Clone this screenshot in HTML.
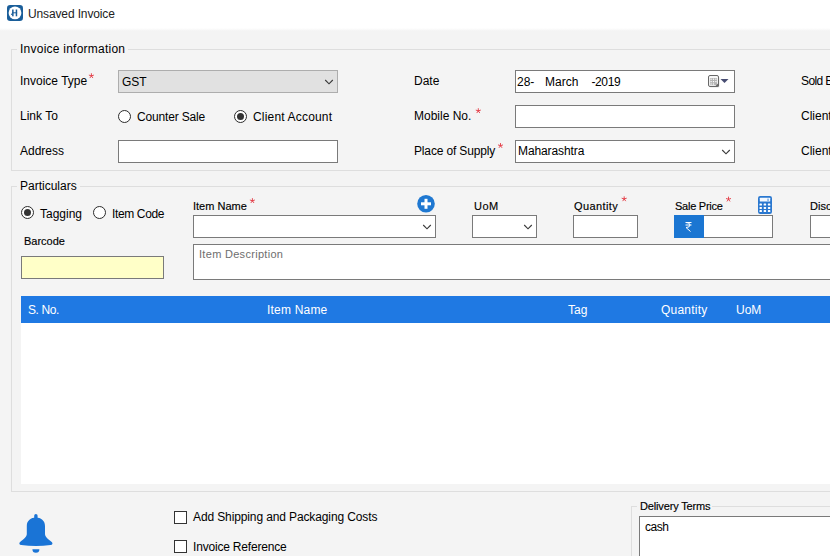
<!DOCTYPE html>
<html><head><meta charset="utf-8">
<style>
html,body{margin:0;padding:0;}
body{width:830px;height:556px;overflow:hidden;position:relative;background:#f4f4f4;font-family:"Liberation Sans",sans-serif;font-size:12px;color:#000;}
.a{position:absolute;}
.t{position:absolute;font-size:12px;line-height:14px;white-space:nowrap;}
.box{position:absolute;box-sizing:border-box;border:1px solid #7a7a7a;background:#fff;}
.grp{position:absolute;box-sizing:border-box;border:1px solid #dedede;}
.st{position:absolute;color:#e23b3b;font-size:11px;line-height:11px;}
.rad{position:absolute;box-sizing:border-box;width:13px;height:13px;border:1.2px solid #2b2b2b;border-radius:50%;background:#fff;}
.rad.on::after{content:"";position:absolute;left:1.8px;top:1.8px;width:7px;height:7px;border-radius:50%;background:#333;}
.chk{position:absolute;box-sizing:border-box;width:13px;height:13px;border:1px solid #333;background:#fff;}
.hdr{color:#fff;}
.sl{font-size:11px;-webkit-text-stroke:0.15px #000;}
</style></head><body>
<!-- title bar -->
<div class="a" style="left:0;top:0;width:830px;height:31px;background:linear-gradient(#fff 0,#fff 28px,#f4f4f4 31px);"></div>
<svg class="a" style="left:7px;top:5px" width="16" height="16" viewBox="0 0 16 16">
<rect x="0" y="0" width="16" height="16" rx="3.2" fill="#1a5e99"/>
<circle cx="8" cy="7.9" r="6.4" fill="#fff"/>
<rect x="5.1" y="4.5" width="1.5" height="6.8" fill="#1a5e99"/>
<rect x="8.7" y="4.5" width="1.5" height="6.8" fill="#1a5e99"/>
<rect x="5.1" y="7.3" width="5" height="1" fill="#1a5e99"/>
<rect x="4.2" y="8.6" width="1.2" height="1.4" fill="#1a5e99"/>
</svg>
<div class="t" style="left:28px;top:7px;color:#222;letter-spacing:-0.13px;">Unsaved Invoice</div>

<!-- group 1 -->
<div class="grp" style="left:11px;top:49px;width:830px;height:122px;"></div>
<div class="t" style="left:17px;top:42px;padding:0 3px;background:#f4f4f4;letter-spacing:0.24px;">Invoice information</div>

<div class="t" style="left:20px;top:74px;">Invoice Type</div>
<div class="box" style="left:118px;top:70px;width:220px;height:23px;background:#e1e1e1;border-color:#adadad;"></div>
<div class="t" style="left:122px;top:75px;">GST</div>

<div class="t" style="left:20px;top:109px;">Link To</div>
<div class="rad" style="left:118px;top:110px;"></div>
<div class="t" style="left:137px;top:110px;letter-spacing:-0.16px;">Counter Sale</div>
<div class="rad on" style="left:234px;top:110px;"></div>
<div class="t" style="left:253px;top:110px;letter-spacing:0.18px;">Client Account</div>

<div class="t" style="left:20px;top:144px;">Address</div>
<div class="box" style="left:118px;top:140px;width:220px;height:23px;"></div>

<div class="t" style="left:414px;top:74px;">Date</div>
<div class="box" style="left:515px;top:70px;width:220px;height:23px;"></div>
<div class="t" style="left:517px;top:75px;">28-</div>
<div class="t" style="left:545px;top:75px;">March</div>
<div class="t" style="left:591.5px;top:75px;letter-spacing:-0.4px;">-2019</div>

<div class="t" style="left:414px;top:109px;">Mobile No.</div>
<div class="box" style="left:515px;top:105px;width:220px;height:23px;"></div>

<div class="t" style="left:414px;top:144px;letter-spacing:-0.15px;">Place of Supply</div>
<div class="box" style="left:515px;top:140px;width:220px;height:23px;"></div>
<div class="t" style="left:518px;top:144px;letter-spacing:-0.1px;">Maharashtra</div>

<div class="t" style="left:801px;top:74px;letter-spacing:-0.6px;">Sold By</div>
<div class="t" style="left:801px;top:109px;">Client Name</div>
<div class="t" style="left:801px;top:144px;">Client Code</div>

<!-- group 2 -->
<div class="grp" style="left:11px;top:186px;width:830px;height:306px;"></div>
<div class="t" style="left:17px;top:179px;padding:0 3px;background:#f4f4f4;">Particulars</div>

<div class="rad on" style="left:21px;top:206px;"></div>
<div class="t" style="left:40px;top:207px;">Tagging</div>
<div class="rad" style="left:93px;top:206px;"></div>
<div class="t" style="left:112px;top:207px;letter-spacing:-0.36px;">Item Code</div>

<div class="t sl" style="left:24px;top:234px;">Barcode</div>
<div class="box" style="left:21px;top:256px;width:143px;height:23px;background:#ffffc8;"></div>

<div class="t sl" style="left:193px;top:199px;">Item Name</div>
<div class="box" style="left:193px;top:215px;width:243px;height:23px;"></div>

<div class="t sl" style="left:474px;top:199px;letter-spacing:0.5px;">UoM</div>
<div class="box" style="left:472px;top:215px;width:65px;height:23px;"></div>

<div class="t sl" style="left:574px;top:199px;letter-spacing:0.4px;">Quantity</div>
<div class="box" style="left:573px;top:215px;width:65px;height:23px;"></div>

<div class="t sl" style="left:675px;top:199px;letter-spacing:-0.25px;">Sale Price</div>
<div class="box" style="left:674px;top:215px;width:99px;height:23px;"></div>
<div class="a" style="left:674px;top:215px;width:30px;height:23px;background:#1b76d2;"></div>

<div class="t sl" style="left:810px;top:199px;">Discount</div>
<div class="box" style="left:810px;top:215px;width:60px;height:23px;"></div>

<div class="box" style="left:193px;top:244px;width:700px;height:36px;"></div>
<div class="t" style="left:199px;top:247px;color:#6e6e6e;font-size:11px;letter-spacing:0.3px;">Item Description</div>

<!-- table -->
<div class="a" style="left:21px;top:296px;width:809px;height:27px;background:#1f79e3;"></div>
<div class="a" style="left:21px;top:323px;width:809px;height:161px;background:#fff;"></div>
<div class="t hdr" style="left:28px;top:303px;letter-spacing:-0.4px;">S. No.</div>
<div class="t hdr" style="left:267px;top:303px;letter-spacing:0.2px;">Item Name</div>
<div class="t hdr" style="left:568px;top:303px;">Tag</div>
<div class="t hdr" style="left:661px;top:303px;letter-spacing:0.23px;">Quantity</div>
<div class="t hdr" style="left:736px;top:303px;">UoM</div>

<!-- bottom -->
<div class="chk" style="left:174px;top:511px;"></div>
<div class="t" style="left:193px;top:510px;letter-spacing:-0.12px;">Add Shipping and Packaging Costs</div>
<div class="chk" style="left:174px;top:540px;"></div>
<div class="t" style="left:193px;top:540px;letter-spacing:-0.19px;">Invoice Reference</div>

<div class="grp" style="left:631px;top:506px;width:300px;height:100px;"></div>
<div class="t sl" style="left:637px;top:499px;padding:0 2px 0 3px;background:#f4f4f4;letter-spacing:-0.15px;">Delivery Terms</div>
<div class="box" style="left:639px;top:516px;width:300px;height:60px;"></div>
<div class="t" style="left:645px;top:520px;letter-spacing:-0.5px;">cash</div>


<!-- icons -->
<svg class="a" style="left:0;top:0" width="830" height="556" viewBox="0 0 830 556">
<g fill="none" stroke="#3a3a3a" stroke-width="1.15">
<polyline points="325.2,80 329,83.8 332.8,80"/>
<polyline points="722.2,150 726,153.8 729.8,150"/>
<polyline points="423.2,225 427,228.8 430.8,225"/>
<polyline points="524.2,225 528,228.8 531.8,225"/>
</g>
<!-- calendar -->
<rect x="709.5" y="76.5" width="10" height="11" rx="1.5" fill="#e6e6e6"/>
<rect x="708.5" y="75.5" width="10" height="11" rx="1.5" fill="#f7f7f7" stroke="#686868" stroke-width="1"/>
<rect x="709.9" y="78" width="7.2" height="7.2" fill="#b4b4b4"/>
<g fill="#fff"><rect x="710.5" y="78.6" width="1.2" height="1.2"/><rect x="712.9" y="78.6" width="1.2" height="1.2"/><rect x="715.3" y="78.6" width="1.2" height="1.2"/><rect x="710.5" y="81.0" width="1.2" height="1.2"/><rect x="712.9" y="81.0" width="1.2" height="1.2"/><rect x="715.3" y="81.0" width="1.2" height="1.2"/><rect x="710.5" y="83.4" width="1.2" height="1.2"/><rect x="712.9" y="83.4" width="1.2" height="1.2"/></g>
<path d="M715 86.5 L719 82.5 L719 86.5 Z" fill="#686868"/>
<polygon points="720.5,79 728.5,79 724.5,83" fill="#474d72"/>
<g stroke="#e4424c" stroke-width="0.95" stroke-linecap="round"><path d="M91.40 75.90L91.40 73.65M91.40 75.90L93.54 75.20M91.40 75.90L92.72 77.72M91.40 75.90L90.08 77.72M91.40 75.90L89.26 75.20"/><path d="M478.30 110.90L478.30 108.65M478.30 110.90L480.44 110.20M478.30 110.90L479.62 112.72M478.30 110.90L476.98 112.72M478.30 110.90L476.16 110.20"/><path d="M500.50 145.70L500.50 143.45M500.50 145.70L502.64 145.00M500.50 145.70L501.82 147.52M500.50 145.70L499.18 147.52M500.50 145.70L498.36 145.00"/><path d="M252.40 200.80L252.40 198.55M252.40 200.80L254.54 200.10M252.40 200.80L253.72 202.62M252.40 200.80L251.08 202.62M252.40 200.80L250.26 200.10"/><path d="M624.20 199.00L624.20 196.75M624.20 199.00L626.34 198.30M624.20 199.00L625.52 200.82M624.20 199.00L622.88 200.82M624.20 199.00L622.06 198.30"/><path d="M728.50 199.30L728.50 197.05M728.50 199.30L730.64 198.60M728.50 199.30L729.82 201.12M728.50 199.30L727.18 201.12M728.50 199.30L726.36 198.60"/></g>
<!-- plus -->
<circle cx="426" cy="203.8" r="8.8" fill="#1f78d1"/>
<rect x="421" y="202.3" width="10" height="3" fill="#fff"/>
<rect x="424.5" y="198.8" width="3" height="10" fill="#fff"/>
<!-- calculator -->
<rect x="758" y="196" width="14" height="18" rx="2.2" fill="#2a78d0"/>
<rect x="759.8" y="197.8" width="10.4" height="3.8" rx="0.5" fill="#f4f9ff"/>
<rect x="767.3" y="198.6" width="1.5" height="2.4" fill="#7aaee6"/>
<g fill="#fff"><rect x="759.45" y="203.60" width="2.5" height="2" rx="0.6"/><rect x="763.65" y="203.60" width="2.5" height="2" rx="0.6"/><rect x="767.85" y="203.60" width="2.5" height="2" rx="0.6"/><rect x="759.45" y="206.90" width="2.5" height="2" rx="0.6"/><rect x="763.65" y="206.90" width="2.5" height="2" rx="0.6"/><rect x="767.85" y="206.90" width="2.5" height="2" rx="0.6"/><rect x="759.45" y="210.10" width="2.5" height="2" rx="0.6"/><rect x="763.65" y="210.10" width="2.5" height="2" rx="0.6"/><rect x="767.85" y="210.10" width="2.5" height="2" rx="0.6"/></g>
<!-- rupee -->
<g fill="none" stroke="#fff" stroke-width="1">
<line x1="685.5" y1="222.5" x2="691.5" y2="222.5"/>
<line x1="685.5" y1="225" x2="691.5" y2="225"/>
<path d="M686 222.5 Q690 222.5 690 225 Q690 227.5 686 227.5 L690.5 231.5"/>
</g>
<!-- bell -->
<g transform="translate(12,506)" fill="#1a74d6">
<rect x="22.2" y="8" width="3.4" height="6" rx="1.7"/>
<path d="M14.8 28 L14.8 20 C14.8 14.5 19 11.5 23.9 11.5 C28.8 11.5 33 14.5 33 20 L33 28 C33 31 36 33 40 36.2 Q41.4 38.4 38.6 39 Q23.9 41 9.2 39 Q6.4 38.4 7.8 36.2 C11.8 33 14.8 31 14.8 28 Z"/>
<path d="M20.4 43.2 A3.5 3.5 0 0 0 27.4 43.2 Z"/>
</g>
</svg>
</body></html>
